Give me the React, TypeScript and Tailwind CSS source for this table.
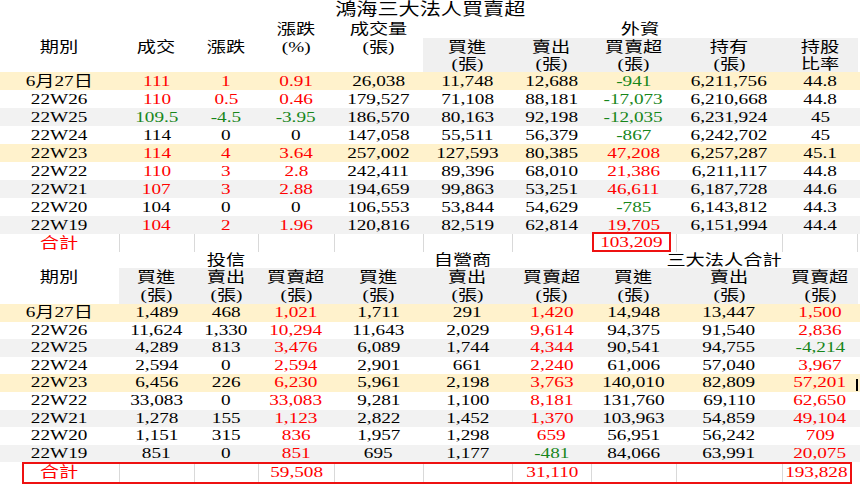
import React from "react";

const GRID =
  "grid grid-cols-[119px_75px_64px_76px_89px_89px_79px_85px_106px_76px]";

const RED = "text-[#ff0000]";
const GREEN = "text-[#17861a]";

const rowBg = [
  "bg-[#fff2cc]",
  "bg-white",
  "bg-[#f2f2f2]",
  "bg-white",
  "bg-[#fff2cc]",
  "bg-white",
  "bg-[#f2f2f2]",
  "bg-white",
  "bg-[#f2f2f2]",
];

const Txt: React.FC<{ children?: React.ReactNode; className?: string }> = ({
  children,
  className = "",
}) => (
  <span className={`inline-block whitespace-nowrap scale-x-[1.28] ${className}`}>
    {children}
  </span>
);

const signTone = (v: string) =>
  v.startsWith("-") ? GREEN : v === "0" ? "text-black" : RED;

// 期別, 成交, 漲跌, 漲跌%, 成交量, 外資 買進, 賣出, 買賣超, 持有, 持股比率
const foreign = [
  ["6月27日", "111", "1", "0.91", "26,038", "11,748", "12,688", "-941", "6,211,756", "44.8"],
  ["22W26", "110", "0.5", "0.46", "179,527", "71,108", "88,181", "-17,073", "6,210,668", "44.8"],
  ["22W25", "109.5", "-4.5", "-3.95", "186,570", "80,163", "92,198", "-12,035", "6,231,924", "45"],
  ["22W24", "114", "0", "0", "147,058", "55,511", "56,379", "-867", "6,242,702", "45"],
  ["22W23", "114", "4", "3.64", "257,002", "127,593", "80,385", "47,208", "6,257,287", "45.1"],
  ["22W22", "110", "3", "2.8", "242,411", "89,396", "68,010", "21,386", "6,211,117", "44.8"],
  ["22W21", "107", "3", "2.88", "194,659", "99,863", "53,251", "46,611", "6,187,728", "44.6"],
  ["22W20", "104", "0", "0", "106,553", "53,844", "54,629", "-785", "6,143,812", "44.3"],
  ["22W19", "104", "2", "1.96", "120,816", "82,519", "62,814", "19,705", "6,151,994", "44.4"],
];

// 期別, 投信 買進/賣出/買賣超, 自營商 買進/賣出/買賣超, 三大法人 買進/賣出/買賣超
const others = [
  ["6月27日", "1,489", "468", "1,021", "1,711", "291", "1,420", "14,948", "13,447", "1,500"],
  ["22W26", "11,624", "1,330", "10,294", "11,643", "2,029", "9,614", "94,375", "91,540", "2,836"],
  ["22W25", "4,289", "813", "3,476", "6,089", "1,744", "4,344", "90,541", "94,755", "-4,214"],
  ["22W24", "2,594", "0", "2,594", "2,901", "661", "2,240", "61,006", "57,040", "3,967"],
  ["22W23", "6,456", "226", "6,230", "5,961", "2,198", "3,763", "140,010", "82,809", "57,201"],
  ["22W22", "33,083", "0", "33,083", "9,281", "1,100", "8,181", "131,760", "69,110", "62,650"],
  ["22W21", "1,278", "155", "1,123", "2,822", "1,452", "1,370", "103,963", "54,859", "49,104"],
  ["22W20", "1,151", "315", "836", "1,957", "1,298", "659", "56,951", "56,242", "709"],
  ["22W19", "851", "0", "851", "695", "1,177", "-481", "84,066", "63,991", "20,075"],
];

const Head2: React.FC<{ a?: string; b?: string; gray?: boolean; hb?: string }> = ({
  a,
  b,
  gray,
  hb = "h-[16px] leading-[16px]",
}) => (
  <div className={`row-span-2 flex flex-col items-center ${gray ? "bg-[#f0f0f0]" : ""}`}>
    <div className="h-[18px] leading-[18px]">{a && <Txt>{a}</Txt>}</div>
    <div className={hb}>{b && <Txt>{b}</Txt>}</div>
  </div>
);

const App: React.FC = () => {
  return (
    <div
      className="w-[860px] h-[484px] overflow-hidden bg-white text-black text-[15px]"
      style={{ fontFamily: '"Liberation Serif", "Noto Sans CJK TC", serif' }}
    >
      {/* title */}
      <div className="h-[20px] leading-[20px] text-center text-[16.5px]">
        <Txt>鴻海三大法人買賣超</Txt>
      </div>

      {/* 外資 header */}
      <div className={`${GRID} grid-rows-[18px_18px_16px]`}>
        <div className="row-span-3 flex flex-col items-center">
          <div className="h-[18px]" />
          <div className="h-[18px] leading-[18px]"><Txt>期別</Txt></div>
        </div>
        <div className="row-span-3 flex flex-col items-center">
          <div className="h-[18px]" />
          <div className="h-[18px] leading-[18px]"><Txt>成交</Txt></div>
        </div>
        <div className="row-span-3 flex flex-col items-center">
          <div className="h-[18px]" />
          <div className="h-[18px] leading-[18px]"><Txt>漲跌</Txt></div>
        </div>
        <div className="row-span-3 flex flex-col items-center">
          <div className="h-[18px] leading-[18px]"><Txt>漲跌</Txt></div>
          <div className="h-[18px] leading-[18px]"><Txt>(%)</Txt></div>
        </div>
        <div className="row-span-3 flex flex-col items-center">
          <div className="h-[18px] leading-[18px]"><Txt>成交量</Txt></div>
          <div className="h-[18px] leading-[18px]"><Txt>(張)</Txt></div>
        </div>
        <div className="col-span-5 h-[18px] leading-[18px] text-center">
          <Txt>外資</Txt>
        </div>
        <Head2 a="買進" b="(張)" gray />
        <Head2 a="賣出" b="(張)" gray />
        <Head2 a="買賣超" b="(張)" gray />
        <Head2 a="持有" b="(張)" gray />
        <Head2 a="持股" b="比率" gray />
      </div>

      {/* 外資 rows */}
      {foreign.map((r, i) => {
        const trend = signTone(r[2]);
        return (
          <div key={r[0]} className={`${GRID} h-[18px] leading-[18px] text-center ${rowBg[i]}`}>
            {r.map((v, j) => {
              const cls =
                j >= 1 && j <= 3 ? trend : j === 7 ? signTone(v) : "text-black";
              return (
                <div key={j}>
                  <Txt className={cls}>{v}</Txt>
                </div>
              );
            })}
          </div>
        );
      })}

      {/* 外資 total */}
      <div className={`${GRID} h-[18px] leading-[18px] text-center`}>
        <div className={RED}><Txt>合計</Txt></div>
        <div className="border-l border-[#d9d9d9]" />
        <div className="border-l border-[#d9d9d9]" />
        <div className="border-l border-[#d9d9d9]" />
        <div className="border-l border-[#d9d9d9]" />
        <div className="border-l border-[#d9d9d9]" />
        <div className="border-l border-[#d9d9d9]" />
        <div className="flex">
          <div className={`ml-[1px] -mt-[2px] h-[20px] w-[79px] leading-[16px] border-2 border-[#ee1111] ${RED}`}>
            <Txt>103,209</Txt>
          </div>
        </div>
        <div className="border-l border-[#d9d9d9]" />
        <div className="border-l border-r border-[#d9d9d9]" />
      </div>

      {/* 投信 / 自營商 / 三大法人 header */}
      <div className={`${GRID} grid-rows-[16px_18px_18px]`}>
        <div className="row-span-3 flex flex-col items-center">
          <div className="h-[16px]" />
          <div className="h-[18px] leading-[18px]"><Txt>期別</Txt></div>
        </div>
        <div className="col-span-3 h-[16px] leading-[16px] text-center"><Txt>投信</Txt></div>
        <div className="col-span-3 h-[16px] leading-[16px] text-center"><Txt>自營商</Txt></div>
        <div className="col-span-3 h-[16px] leading-[16px] text-center"><Txt>三大法人合計</Txt></div>
        {["買進", "賣出", "買賣超", "買進", "賣出", "買賣超", "買進", "賣出", "買賣超"].map((h, i) => (
          <Head2 key={i} a={h} b="(張)" gray hb="h-[18px] leading-[18px]" />
        ))}
      </div>

      {/* 投信 rows */}
      {others.map((r, i) => (
        <div key={r[0]} className={`${GRID} h-[17.6px] leading-[17.6px] text-center ${rowBg[i]}`}>
          {r.map((v, j) => {
            const cls = j === 3 || j === 6 || j === 9 ? signTone(v) : "text-black";
            return (
              <div key={j} className={j === 9 && i === 4 ? "relative" : ""}>
                <Txt className={cls}>{v}</Txt>
                {j === 9 && i === 4 && (
                  <div className="absolute right-0 top-[5px] h-[12px] w-[2px] bg-black" />
                )}
              </div>
            );
          })}
        </div>
      ))}

      {/* bottom total */}
      <div className={`${GRID} relative h-[21.6px] leading-[20px] text-center ${RED}`}>
        <div><Txt>合計</Txt></div>
        <div className="border-l border-[#d9d9d9]" />
        <div className="border-l border-[#d9d9d9]" />
        <div className="border-l border-[#d9d9d9]"><Txt>59,508</Txt></div>
        <div className="border-l border-[#d9d9d9]" />
        <div className="border-l border-[#d9d9d9]" />
        <div className="border-l border-[#d9d9d9]"><Txt>31,110</Txt></div>
        <div className="border-l border-[#d9d9d9]" />
        <div className="border-l border-[#d9d9d9]" />
        <div className="border-l border-[#d9d9d9] pr-[8px]"><Txt>193,828</Txt></div>
        <div className="absolute left-[22px] right-[8px] top-0 bottom-0 border-2 border-[#ee1111]" />
      </div>
    </div>
  );
};

export default App;
